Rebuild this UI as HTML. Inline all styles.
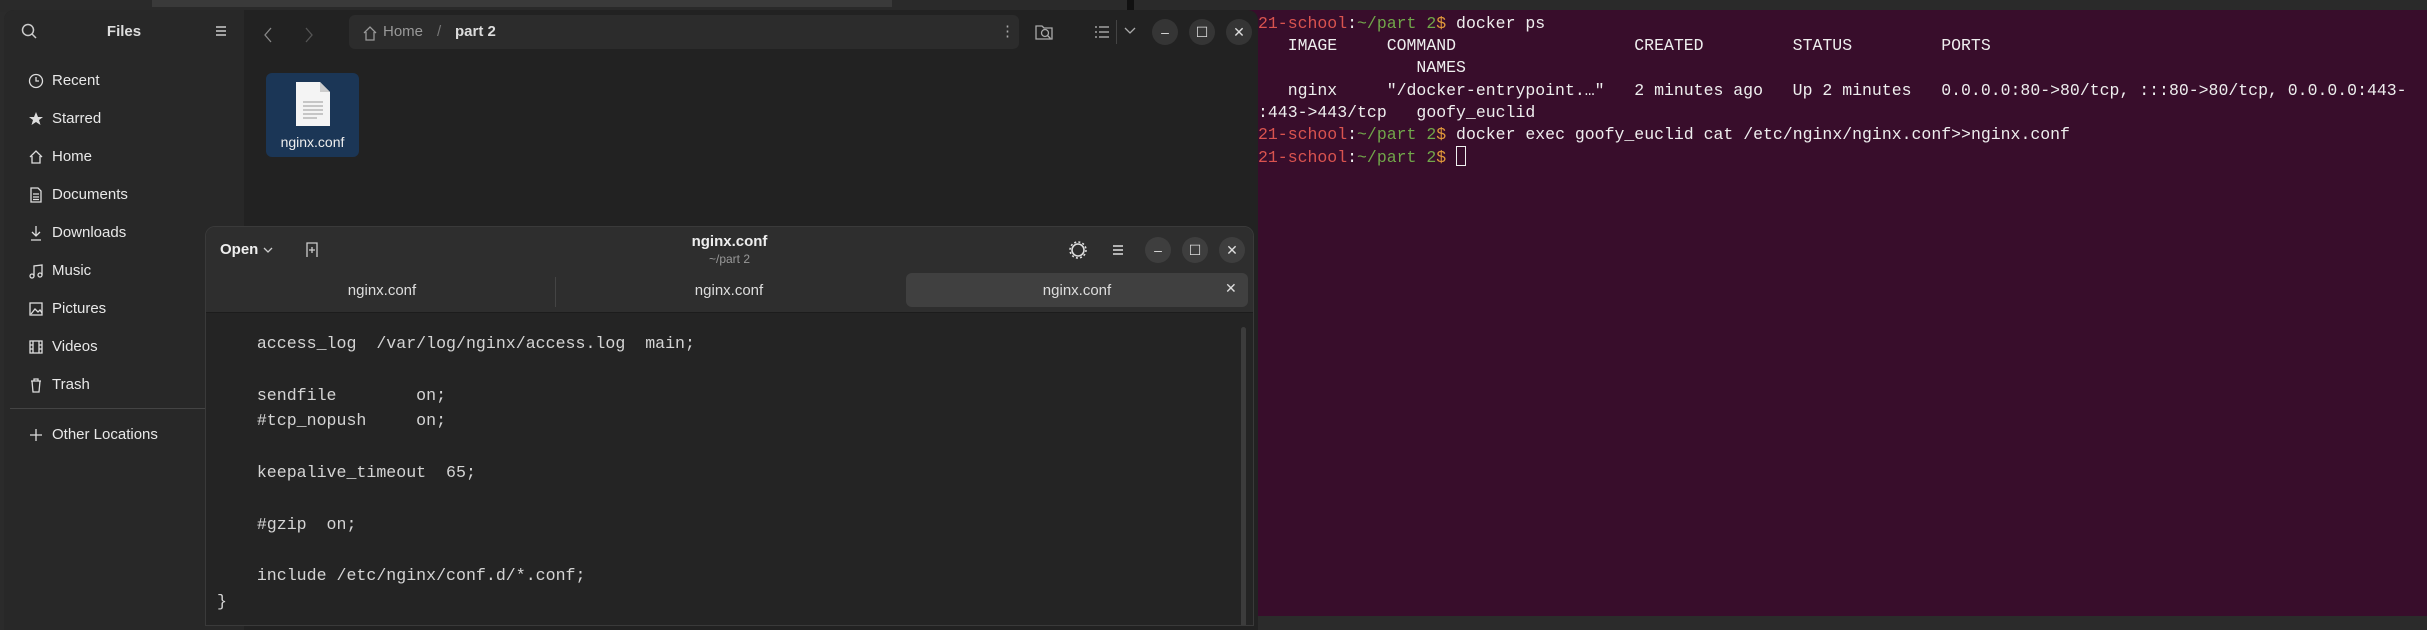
<!DOCTYPE html>
<html><head><meta charset="utf-8"><style>
*{margin:0;padding:0;box-sizing:border-box}
body{width:2427px;height:616px;overflow:hidden;background:#2b2b2b;position:relative;font-family:"Liberation Sans",sans-serif}
.abs{position:absolute}
#topbar{left:0;top:0;width:2427px;height:12px;background:#2a2a2a}
#term{left:1240px;top:10px;width:1187px;height:606px;background:#380d2b}
#term pre{position:absolute;left:18px;top:3px;font-family:"Liberation Mono",monospace;font-size:16.5px;line-height:22.2px;color:#eeeeee;white-space:pre}
.r{color:#d9534f}.g{color:#71a64a}.o{color:#e0983a}
.cur{display:inline-block;width:10px;height:20px;border:1.5px solid #eee;vertical-align:-4px}
#files{left:4px;top:10px;width:1254px;height:620px;background:#222222;border-radius:10px 10px 0 0;overflow:hidden}
#side{left:0;top:0;width:240px;height:620px;background:#282828}
.si{position:absolute;left:24px;font-size:15px;color:#e8e8e8;display:flex;align-items:center;gap:0}
.si svg{width:16px;height:16px;margin-right:8px}
.btn{position:absolute;width:26px;height:26px;border-radius:50%;background:#353535;color:#ddd;display:flex;align-items:center;justify-content:center;font-size:14px}
#editor{left:205px;top:226px;width:1049px;height:400px;background:#242424;border-radius:10px 10px 0 0;overflow:hidden;border:1px solid #3a3a3a}
#ehead{left:0;top:0;width:100%;height:86px;background:#2e2e2e;border-bottom:1px solid #1c1c1c}
.tab{position:absolute;top:46px;height:34px;font-size:15px;color:#ddd;display:flex;align-items:center;justify-content:center}
#code{left:11px;top:104px;font-family:"Liberation Mono",monospace;font-size:16.6px;line-height:25.8px;color:#d4d4d4;white-space:pre}
</style></head><body>
<div class="abs" id="topbar"><div class="abs" style="left:152px;top:0;width:740px;height:7px;background:#3a3a3a"></div><div class="abs" style="left:1127px;top:0;width:7px;height:12px;background:#111"></div></div>

<div class="abs" id="term"><pre><span class="r">21-school</span>:<span class="g">~/part 2</span><span class="o">$</span> docker ps
   IMAGE     COMMAND                  CREATED         STATUS         PORTS
                NAMES
   nginx     "/docker-entrypoint.…"   2 minutes ago   Up 2 minutes   0.0.0.0:80->80/tcp, :::80->80/tcp, 0.0.0.0:443-
:443->443/tcp   goofy_euclid
<span class="r">21-school</span>:<span class="g">~/part 2</span><span class="o">$</span> docker exec goofy_euclid cat /etc/nginx/nginx.conf>>nginx.conf
<span class="r">21-school</span>:<span class="g">~/part 2</span><span class="o">$</span> <span class="cur"></span></pre></div>

<div class="abs" id="files">
 <div class="abs" id="side">
  <svg class="abs" style="left:16px;top:12px" width="18" height="18" viewBox="0 0 18 18" fill="none" stroke="#ccc" stroke-width="1.5"><circle cx="8" cy="8" r="5.5"/><path d="M12 12l4 4"/></svg>
  <div class="abs" style="left:0;width:240px;top:13px;text-align:center;font-size:15px;font-weight:bold;color:#ddd">Files</div>
  <svg class="abs" style="left:210px;top:14px" width="14" height="14" viewBox="0 0 14 14" stroke="#ccc" stroke-width="1.5"><path d="M2 3h10M2 7h10M2 11h10"/></svg>
  <div class="si" style="top:62px"><svg viewBox="0 0 16 16" fill="none" stroke="#ddd" stroke-width="1.3"><circle cx="8" cy="8" r="6.5"/><path d="M8 4v4h3"/></svg>Recent</div>
  <div class="si" style="top:100px"><svg viewBox="0 0 16 16" fill="#ddd"><path d="M8 1l2 5h5l-4 3 1.5 5L8 11l-4.5 3L5 9 1 6h5z"/></svg>Starred</div>
  <div class="si" style="top:138px"><svg viewBox="0 0 16 16" fill="none" stroke="#ddd" stroke-width="1.3"><path d="M2 8l6-6 6 6M4 7v7h8V7"/></svg>Home</div>
  <div class="si" style="top:176px"><svg viewBox="0 0 16 16" fill="none" stroke="#ddd" stroke-width="1.3"><path d="M3 1h7l3 3v11H3z M5 7h6M5 10h6M5 12.5h6"/></svg>Documents</div>
  <div class="si" style="top:214px"><svg viewBox="0 0 16 16" fill="none" stroke="#ddd" stroke-width="1.3"><path d="M8 1v10M4 7l4 4 4-4M3 15h10"/></svg>Downloads</div>
  <div class="si" style="top:252px"><svg viewBox="0 0 16 16" fill="none" stroke="#ddd" stroke-width="1.3"><path d="M6 13V3l8-1v10"/><circle cx="4" cy="13" r="2"/><circle cx="12" cy="12" r="2"/></svg>Music</div>
  <div class="si" style="top:290px"><svg viewBox="0 0 16 16" fill="none" stroke="#ddd" stroke-width="1.3"><rect x="2" y="2" width="12" height="12"/><path d="M3 13l4-5 3 3 2-2 2 3"/></svg>Pictures</div>
  <div class="si" style="top:328px"><svg viewBox="0 0 16 16" fill="none" stroke="#ddd" stroke-width="1.3"><rect x="2" y="2" width="12" height="12"/><path d="M5 2v12M11 2v12M2 6h3M2 10h3M11 6h3M11 10h3"/></svg>Videos</div>
  <div class="si" style="top:366px"><svg viewBox="0 0 16 16" fill="none" stroke="#ddd" stroke-width="1.3"><path d="M3 4h10M6 4V2h4v2M4 4l1 11h6l1-11"/></svg>Trash</div>
  <div class="abs" style="left:6px;top:398px;width:240px;height:1px;background:#444"></div>
  <div class="si" style="top:416px"><svg viewBox="0 0 16 16" fill="none" stroke="#ddd" stroke-width="1.3"><path d="M8 2v12M2 8h12"/></svg>Other Locations</div>
 </div>
 <svg class="abs" style="left:258px;top:16px" width="12" height="18" viewBox="0 0 12 18" fill="none" stroke="#888" stroke-width="1.3"><path d="M9 2L3 9l6 7"/></svg>
 <svg class="abs" style="left:299px;top:16px" width="12" height="18" viewBox="0 0 12 18" fill="none" stroke="#555" stroke-width="1.3"><path d="M3 2l6 7-6 7"/></svg>
 <div class="abs" style="left:345px;top:5px;width:670px;height:34px;background:#2c2c2c;border-radius:6px"></div>
 <svg class="abs" style="left:358px;top:14px" width="16" height="18" viewBox="0 0 16 18" fill="none" stroke="#999" stroke-width="1.3"><path d="M2 9l6-6 6 6M4 8v8h8V8"/></svg>
 <div class="abs" style="left:379px;top:13px;font-size:15px;color:#999">Home</div>
 <div class="abs" style="left:433px;top:13px;font-size:15px;color:#777">/</div>
 <div class="abs" style="left:451px;top:13px;font-size:15px;color:#ddd;font-weight:bold">part 2</div>
 <div class="abs" style="left:996px;top:12px;font-size:15px;color:#aaa">⋮</div>
 <svg class="abs" style="left:1030px;top:12px" width="20" height="20" viewBox="0 0 20 20" fill="none" stroke="#aaa" stroke-width="1.3"><path d="M2 4h6l2 2h8v11H2z"/><circle cx="11" cy="11" r="3.5"/><path d="M13.5 13.5l3 3"/></svg>
 <svg class="abs" style="left:1090px;top:15px" width="16" height="14" viewBox="0 0 16 14" stroke="#bbb" stroke-width="1.3" fill="none"><path d="M1 2h2M1 7h2M1 12h2M5 2h10M5 7h10M5 12h10"/></svg>
 <div class="abs" style="left:1112px;top:10px;width:1px;height:24px;background:#444"></div>
 <svg class="abs" style="left:1120px;top:17px" width="12" height="8" viewBox="0 0 12 8" stroke="#aaa" stroke-width="1.3" fill="none"><path d="M1 1l5 5 5-5"/></svg>
 <div class="btn" style="left:1148px;top:9px">–</div>
 <div class="btn" style="left:1185px;top:9px">☐</div>
 <div class="btn" style="left:1222px;top:9px">✕</div>
 <div class="abs" style="left:262px;top:63px;width:93px;height:84px;background:#1b3656;border-radius:6px"></div>
 <svg class="abs" style="left:290px;top:70px" width="38" height="48" viewBox="0 0 38 48"><path d="M2 2h24l10 10v34H2z" fill="#f4f4f4"/><path d="M26 2v10h10" fill="#ccc"/><path d="M9 22h20M9 26h20M9 30h20M9 34h20M9 38h14" stroke="#aaa" stroke-width="1.2"/></svg>
 <div class="abs" style="left:262px;top:124px;width:93px;text-align:center;font-size:14px;color:#eee">nginx.conf</div>
</div>

<div class="abs" id="editor">
 <div class="abs" id="ehead">
  <div class="abs" style="left:14px;top:14px;font-size:15px;font-weight:bold;color:#eee">Open</div>
  <svg class="abs" style="left:57px;top:20px" width="10" height="7" viewBox="0 0 10 7" stroke="#ccc" stroke-width="1.3" fill="none"><path d="M1 1l4 4 4-4"/></svg>
  <svg class="abs" style="left:99px;top:15px" width="14" height="16" viewBox="0 0 14 16" stroke="#ccc" stroke-width="1.3" fill="none"><path d="M2 15V1h10v14M7 5v6M4 8h6"/></svg>
  <div class="abs" style="left:0;width:100%;top:6px;text-align:center;font-size:15px;font-weight:bold;color:#eee">nginx.conf</div>
  <div class="abs" style="left:0;width:100%;top:25px;text-align:center;font-size:12px;color:#999">~/part 2</div>
  <svg class="abs" style="left:862px;top:13px" width="20" height="20" viewBox="0 0 20 20" stroke="#ddd" stroke-width="1.6" fill="none"><circle cx="10" cy="10" r="6"/><circle cx="10" cy="10" r="8" stroke-dasharray="2 2.2"/></svg>
  <svg class="abs" style="left:905px;top:16px" width="14" height="14" viewBox="0 0 14 14" stroke="#ddd" stroke-width="1.5"><path d="M2 3h10M2 7h10M2 11h10"/></svg>
  <div class="btn" style="left:939px;top:10px;background:#3e3e3e">–</div>
  <div class="btn" style="left:976px;top:10px;background:#3e3e3e">☐</div>
  <div class="btn" style="left:1013px;top:10px;background:#3e3e3e">✕</div>
  <div class="tab" style="left:4px;width:344px">nginx.conf</div>
  <div class="abs" style="left:349px;top:50px;width:1px;height:30px;background:#444"></div>
  <div class="tab" style="left:350px;width:346px">nginx.conf</div>
  <div class="tab" style="left:700px;width:342px;background:#404040;border-radius:6px">nginx.conf</div>
  <div class="abs" style="left:1019px;top:53px;font-size:14px;color:#ddd">✕</div>
 </div>
 <div class="abs" style="left:1035px;top:100px;width:5px;height:300px;background:#3c3c3c;border-radius:3px"></div>
 <div class="abs" id="code">    access_log  /var/log/nginx/access.log  main;

    sendfile        on;
    #tcp_nopush     on;

    keepalive_timeout  65;

    #gzip  on;

    include /etc/nginx/conf.d/*.conf;
}</div>
</div>
</body></html>
